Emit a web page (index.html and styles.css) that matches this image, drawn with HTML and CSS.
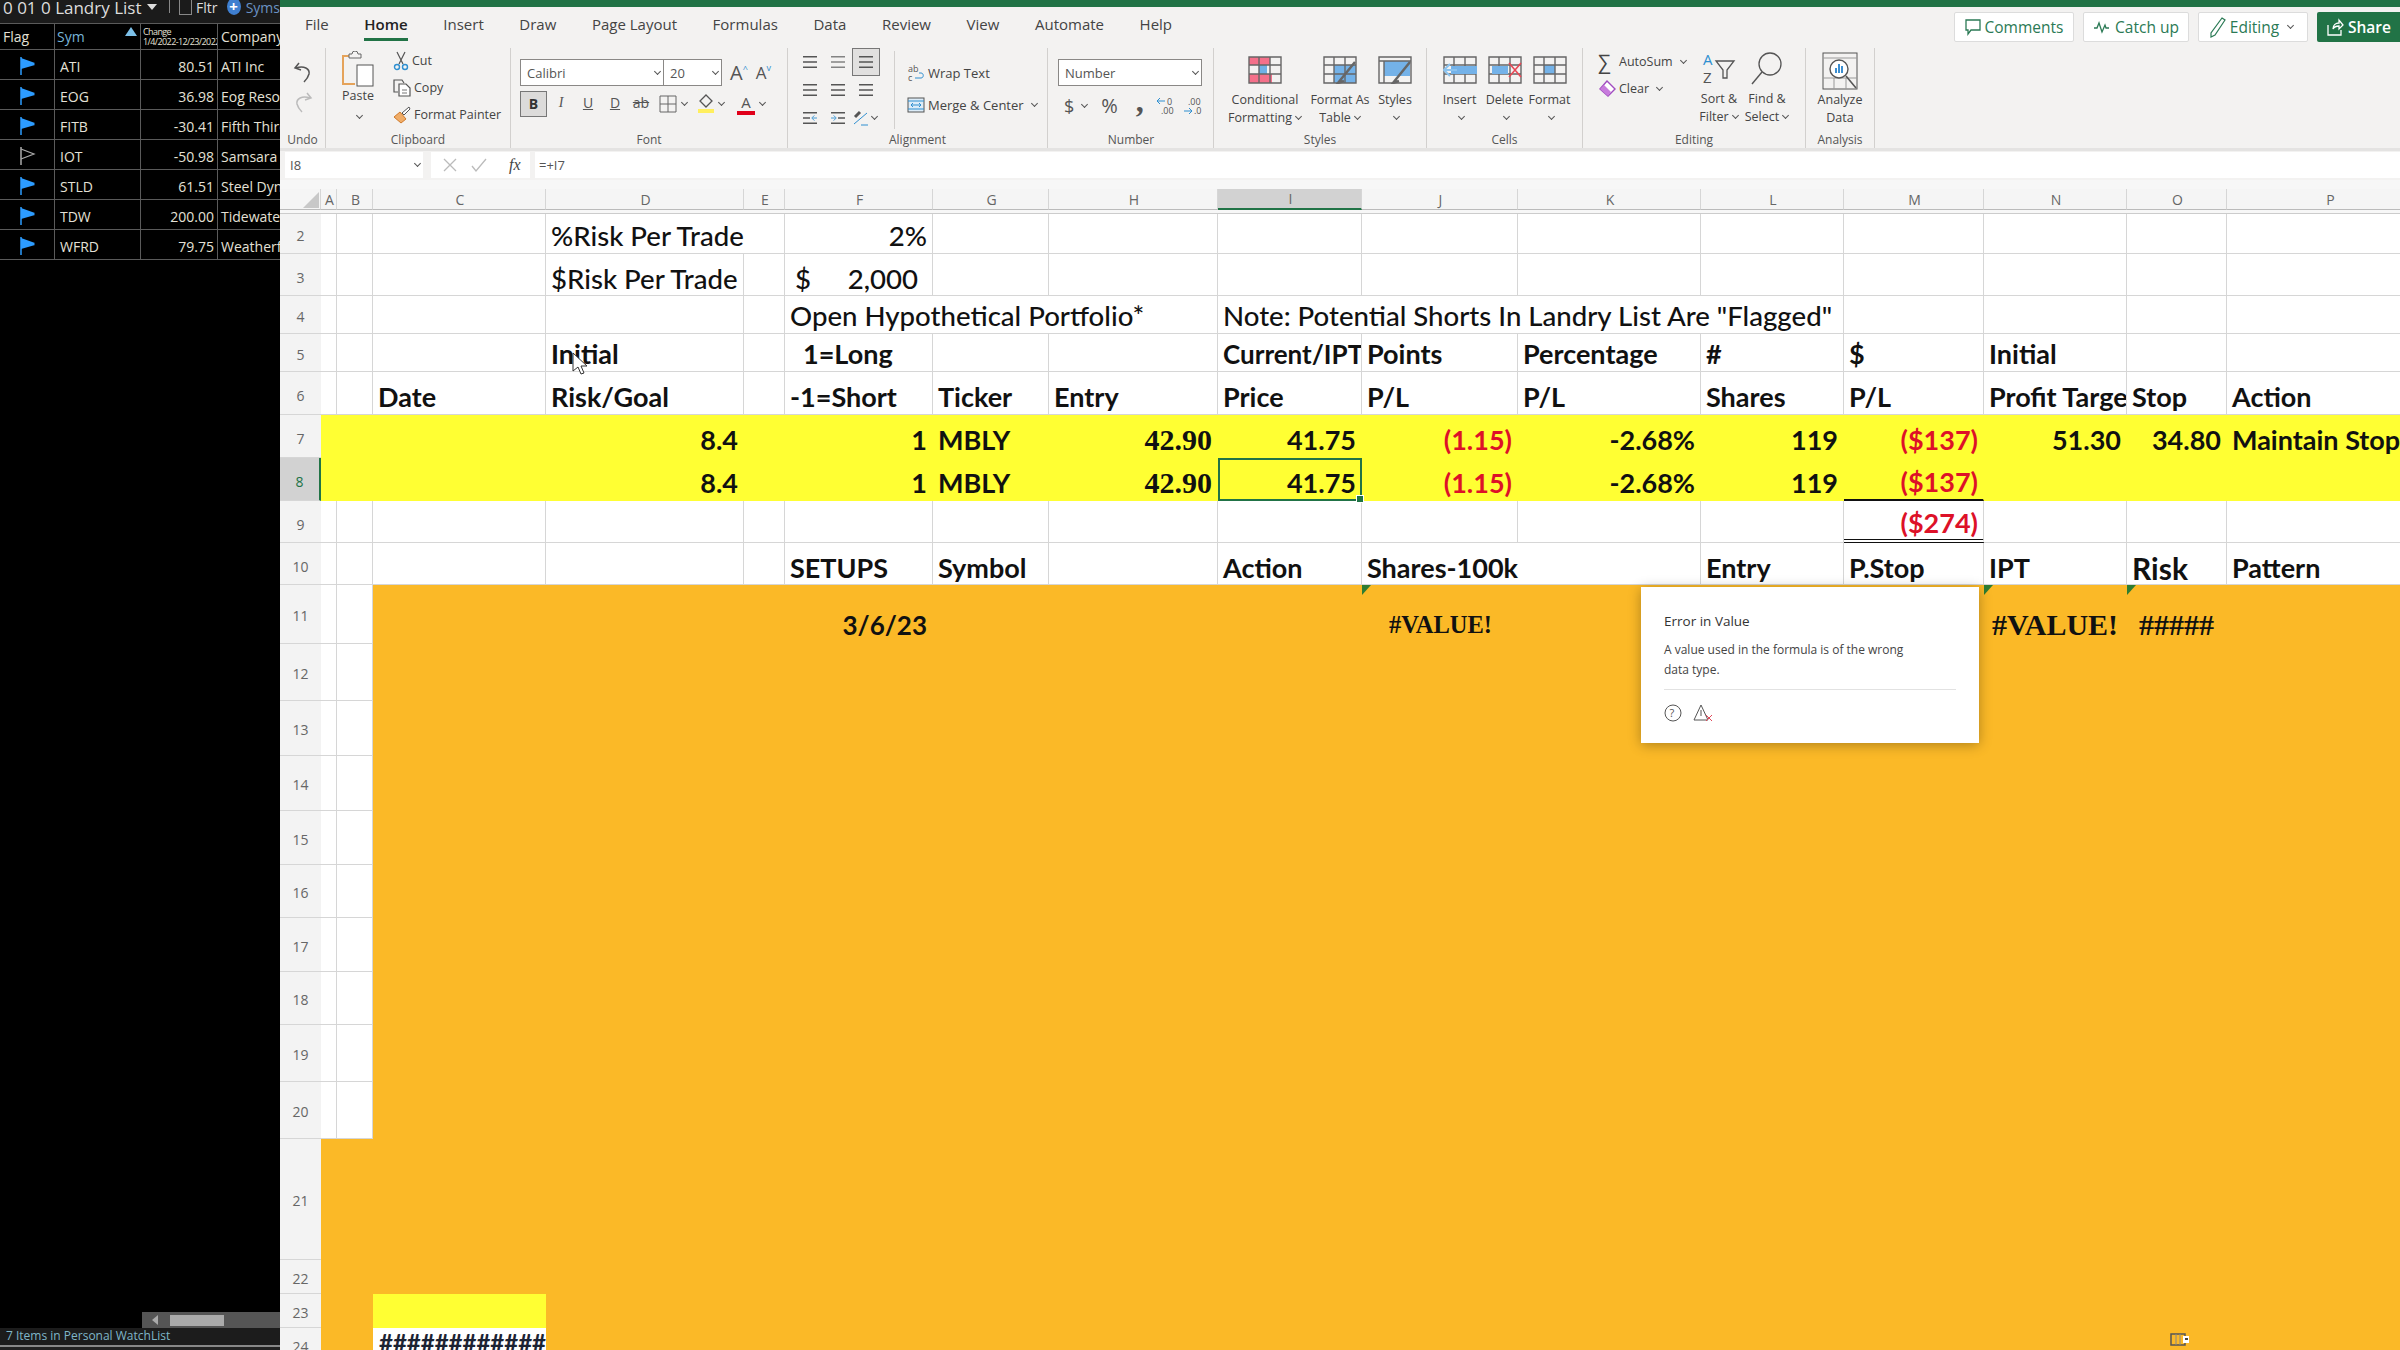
FILE: index.html
```html
<!DOCTYPE html>
<html lang="en">
<head>
    <meta charset="UTF-8">
    <title>Landry List - Excel</title>
    <link rel="stylesheet" href="styles.css">
</head>
<body>
    <svg class="defs" width="0" height="0">
        <symbol id="flag" viewBox="0 0 18 20"><path d="M2 1v18" stroke="currentColor" stroke-width="1.5"/><path d="M2 2l14 5-1 1 1 1-14 4z" fill="currentColor"/></symbol>
        <symbol id="flag-o" viewBox="0 0 18 20"><path d="M2 1v18" stroke="currentColor" stroke-width="1.5"/><path d="M2 3l13 5-13 5" fill="none" stroke="currentColor" stroke-width="1.2"/></symbol>
        <symbol id="grid" viewBox="0 0 34 28"><path d="M1 1h32v26H1zM1 9h32M1 18h32M11 1v26M22 1v26" fill="none" stroke="#666" stroke-width="1.4"/></symbol>
        <symbol id="lines" viewBox="0 0 18 16"><path d="M1 2h16M1 8h16M1 14h16" stroke="#555" stroke-width="1.6"/></symbol>
    </svg>

    <!-- watchlist panel -->
    <aside class="watchlist">
        <div class="wl-title">
            <span class="wl-name">0 01 0 Landry List</span>
            <span class="wl-caret"></span>
            <span class="wl-div"></span>
            <span class="wl-check"></span>
            <span class="wl-fltr">Fltr</span>
            <span class="wl-plus">+</span>
            <span class="wl-syms">Syms</span>
        </div>
        <table class="watch">
            <colgroup><col class="w1"><col class="w2"><col class="w3"><col class="w4"></colgroup>
            <tr class="wh">
                <th>Flag</th>
                <th class="sym">Sym<span class="sort"></span></th>
                <th class="chg">Change<br>1/4/2022-12/23/2022</th>
                <th>Company</th>
            </tr>
            <tr><td class="fl"><svg><use href="#flag"/></svg></td><td>ATI</td><td class="n">80.51</td><td>ATI Inc</td></tr>
            <tr><td class="fl"><svg><use href="#flag"/></svg></td><td>EOG</td><td class="n">36.98</td><td>Eog Resources</td></tr>
            <tr><td class="fl"><svg><use href="#flag"/></svg></td><td>FITB</td><td class="n">-30.41</td><td>Fifth Third</td></tr>
            <tr><td class="fl off"><svg><use href="#flag-o"/></svg></td><td>IOT</td><td class="n">-50.98</td><td>Samsara</td></tr>
            <tr><td class="fl"><svg><use href="#flag"/></svg></td><td>STLD</td><td class="n">61.51</td><td>Steel Dynamics</td></tr>
            <tr><td class="fl"><svg><use href="#flag"/></svg></td><td>TDW</td><td class="n">200.00</td><td>Tidewater</td></tr>
            <tr><td class="fl"><svg><use href="#flag"/></svg></td><td>WFRD</td><td class="n">79.75</td><td>Weatherford</td></tr>
        </table>
        <div class="wl-scroll"><span class="wl-left"></span><span class="wl-thumb"></span></div>
        <div class="wl-status">7 Items in Personal WatchList</div>
        <div class="wl-foot"></div>
    </aside>

    <main class="excel">
        <div class="greenbar"></div>

        <!-- tabs -->
        <div class="tabs">
            <a>File</a><a class="active">Home</a><a>Insert</a><a>Draw</a><a>Page Layout</a><a>Formulas</a><a>Data</a><a>Review</a><a>View</a><a>Automate</a><a>Help</a>
            <div class="actions">
                <button class="act b1"><svg width="16" height="18" viewBox="0 0 16 18"><path d="M1 2h14v10H6l-3 4v-4H1z" fill="none" stroke="#2b7a55" stroke-width="1.3"/></svg>Comments</button>
                <button class="act b2"><svg width="18" height="14" viewBox="0 0 18 14"><path d="M1 8h3l2-5 3 9 3-7 1 3h3" fill="none" stroke="#2b7a55" stroke-width="1.3"/></svg>Catch up</button>
                <button class="act b3"><svg width="16" height="22" viewBox="0 0 16 22"><path d="M12 2l3 2L5 19l-4 2 0-4z" fill="none" stroke="#2b7a55" stroke-width="1.2"/></svg>Editing<span class="chev"></span></button>
                <button class="act share"><svg width="18" height="18" viewBox="0 0 18 18"><path d="M2 7v10h13v-5M7 11c0-4 3-6 6-6V2l4 5-4 4V8c-3 0-5 1-6 3z" fill="none" stroke="#fff" stroke-width="1.3"/></svg>Share</button>
            </div>
        </div>

        <!-- ribbon -->
        <div class="ribbon">
            <section class="rg g-undo">
                <div class="rb undo-col">
                    <svg width="20" height="22" viewBox="0 0 20 22"><path d="M6 2L2 7l6 2M3 7c8-3 14 1 13 6-1 4-3 6-5 8" fill="none" stroke="#555" stroke-width="1.5"/></svg>
                    <svg width="20" height="22" viewBox="0 0 20 22"><path d="M14 2l4 5-6 2M17 7C9 4 3 8 4 13c1 4 3 6 5 8" fill="none" stroke="#bbb" stroke-width="1.5"/></svg>
                </div>
                <label>Undo</label>
            </section>

            <section class="rg g-clip">
                <div class="rb row">
                    <div class="paste">
                        <svg width="34" height="36" viewBox="0 0 34 36"><path d="M17 5H2v28h12" fill="none" stroke="#e5a35a" stroke-width="2"/><path d="M8 7V3h3a3 3 0 0 1 6 0h3v4z" fill="#f3f2f1" stroke="#666"/><rect x="16" y="14" width="16" height="21" fill="#fff" stroke="#555"/></svg>
                        <span>Paste</span>
                        <span class="chev"></span>
                    </div>
                    <div class="small-col">
                        <div class="sm"><svg width="16" height="20" viewBox="0 0 16 20"><path d="M4 1l6 12M12 1L6 13" stroke="#555" stroke-width="1.2"/><circle cx="4" cy="16" r="2.5" fill="none" stroke="#2f8fd0" stroke-width="1.4"/><circle cx="12" cy="16" r="2.5" fill="none" stroke="#2f8fd0" stroke-width="1.4"/></svg>Cut</div>
                        <div class="sm"><svg width="18" height="18" viewBox="0 0 18 18"><path d="M5 13H1V1h8l2 3" fill="none" stroke="#555" stroke-width="1.2"/><path d="M6 5h7l4 4v8H6z" fill="#fff" stroke="#555" stroke-width="1.2"/><path d="M9 11h5M9 14h5" stroke="#777"/></svg>Copy</div>
                        <div class="sm"><svg width="18" height="18" viewBox="0 0 18 18"><path d="M1 11l6-5 6 7-5 4z" fill="#f0ad68" stroke="#d07a2a"/><path d="M9 7l7-6 1 2-6 6z" fill="#fff" stroke="#555"/></svg>Format Painter</div>
                    </div>
                </div>
                <label>Clipboard</label>
            </section>

            <section class="rg g-font">
                <div class="rb">
                    <div class="font-row">
                        <div class="select s-font">Calibri<span class="chev"></span></div>
                        <div class="select s-size">20<span class="chev"></span></div>
                        <span class="grow big">A<sup>^</sup></span>
                        <span class="grow">A<sup>v</sup></span>
                    </div>
                    <div class="font-row tools">
                        <span class="tool on">B</span>
                        <span class="tool t-i">I</span>
                        <span class="tool t-u">U</span>
                        <span class="tool t-d">D</span>
                        <span class="tool t-s">ab</span>
                        <svg class="t-bd" width="18" height="18" viewBox="0 0 18 18"><path d="M1 1h16v16H1zM9 1v16M1 9h16" fill="none" stroke="#666"/></svg><span class="chev"></span>
                        <svg class="t-fill" width="16" height="20" viewBox="0 0 16 20"><path d="M8 1l6 6-6 6-6-6z" fill="none" stroke="#555" stroke-width="1.3"/><rect y="15" width="16" height="4" fill="#ffef5e"/></svg><span class="chev"></span>
                        <span class="t-color">A</span><span class="chev"></span>
                    </div>
                </div>
                <label>Font</label>
            </section>

            <section class="rg g-align">
                <div class="rb row">
                    <div class="align-grid">
                        <span><svg width="16" height="14"><use href="#lines"/></svg></span>
                        <span class="lite"><svg width="16" height="14"><use href="#lines"/></svg></span>
                        <span class="on"><svg width="16" height="14"><use href="#lines"/></svg></span>
                        <span><svg width="16" height="14"><use href="#lines"/></svg></span>
                        <span><svg width="16" height="14"><use href="#lines"/></svg></span>
                        <span><svg width="16" height="14"><use href="#lines"/></svg></span>
                        <span><svg width="16" height="14" viewBox="0 0 18 16"><path d="M1 2h16M1 14h16M1 8h8" stroke="#555" stroke-width="1.6"/><path d="M12 8h5M14 5l-3 3 3 3" stroke="#2f8fd0" fill="none"/></svg></span>
                        <span><svg width="16" height="14" viewBox="0 0 18 16"><path d="M1 2h16M1 14h16M9 8h8" stroke="#555" stroke-width="1.6"/><path d="M1 8h5M4 5l3 3-3 3" stroke="#2f8fd0" fill="none"/></svg></span>
                        <span class="ori"><svg width="16" height="16" viewBox="0 0 16 16"><path d="M1 14L14 3M8 15h7" stroke="#2f8fd0" fill="none"/><path d="M2 7l5-5" stroke="#555" stroke-width="3"/></svg><i class="chev"></i></span>
                    </div>
                    <div class="wrap-col">
                        <div class="sm"><svg width="18" height="18" viewBox="0 0 18 18"><text x="1" y="8" font-size="9" font-family="Open Sans" fill="#555">ab</text><text x="1" y="17" font-size="9" font-family="Open Sans" fill="#555">c</text><path d="M8 14h6c3 0 3-5 0-5h-2" fill="none" stroke="#2f8fd0"/></svg>Wrap Text</div>
                        <div class="sm"><svg width="18" height="18" viewBox="0 0 18 18"><rect x="1" y="2" width="16" height="14" fill="#dcecf8" stroke="#555"/><path d="M1 5h16M1 13h16M4 9h10M6 7L4 9l2 2M12 7l2 2-2 2" fill="none" stroke="#2f8fd0"/></svg>Merge &amp; Center<span class="chev"></span></div>
                    </div>
                </div>
                <label>Alignment</label>
            </section>

            <section class="rg g-num">
                <div class="rb">
                    <div class="font-row"><div class="select s-num">Number<span class="chev"></span></div></div>
                    <div class="font-row num-tools">
                        <span class="n-dollar">$</span><span class="chev"></span>
                        <span class="n-pct">%</span>
                        <span class="n-comma">,</span>
                        <svg width="20" height="18" viewBox="0 0 20 18"><path d="M9 4H1M4 1L1 4l3 3" fill="none" stroke="#2f8fd0"/><text x="11" y="8" font-size="9" font-family="Open Sans" fill="#555">0</text><text x="5" y="17" font-size="9" font-family="Open Sans" fill="#555">.00</text></svg>
                        <svg width="20" height="18" viewBox="0 0 20 18"><path d="M1 14h8M6 11l3 3-3 3" fill="none" stroke="#2f8fd0"/><text x="5" y="8" font-size="9" font-family="Open Sans" fill="#555">.00</text><text x="11" y="17" font-size="9" font-family="Open Sans" fill="#555">.0</text></svg>
                    </div>
                </div>
                <label>Number</label>
            </section>

            <section class="rg g-styles">
                <div class="rb row">
                    <div class="bigbtn b-cond">
                        <svg width="34" height="28" viewBox="0 0 34 28"><path d="M1 1h21v8H1zM1 18h23v9H1z" fill="#f4708a"/><path d="M11 9h8v9h-8z" fill="#6fb1e6"/><use href="#grid" width="34" height="28"/></svg>
                        <span>Conditional</span><span>Formatting<i class="chev"></i></span>
                    </div>
                    <div class="bigbtn b-table">
                        <svg width="34" height="28" viewBox="0 0 34 28"><path d="M11 9h22v18H11z" fill="#74b2e8"/><use href="#grid" width="34" height="28"/><path d="M32 6L19 22M19 22l-4 5 6-2" stroke="#666" stroke-width="2.5" fill="none"/></svg>
                        <span>Format As</span><span>Table<i class="chev"></i></span>
                    </div>
                    <div class="bigbtn b-sty">
                        <svg width="34" height="28" viewBox="0 0 34 28"><path d="M6 5h26v15H6z" fill="#74b2e8"/><path d="M1 1h32v26H1zM1 5h32M6 5v22" fill="none" stroke="#666" stroke-width="1.4"/><path d="M32 6L19 22M19 22l-4 5 6-2" stroke="#666" stroke-width="2.5" fill="none"/></svg>
                        <span>Styles</span><span><i class="chev"></i></span>
                    </div>
                </div>
                <label>Styles</label>
            </section>

            <section class="rg g-cells">
                <div class="rb row">
                    <div class="bigbtn">
                        <svg width="34" height="28" viewBox="0 0 34 28"><use href="#grid" width="34" height="28"/><path d="M8 10h26v8H8z" fill="#74b2e8"/><path d="M14 14H1M7 8l-6 6 6 6" stroke="#8cc3ee" stroke-width="2" fill="none"/></svg>
                        <span>Insert</span><span><i class="chev"></i></span>
                    </div>
                    <div class="bigbtn">
                        <svg width="34" height="28" viewBox="0 0 34 28"><use href="#grid" width="34" height="28"/><path d="M4 10h16v8H4z" fill="#74b2e8"/><path d="M21 7l12 14M33 7L21 21" stroke="#e84855" stroke-width="1.6"/></svg>
                        <span>Delete</span><span><i class="chev"></i></span>
                    </div>
                    <div class="bigbtn">
                        <svg width="34" height="28" viewBox="0 0 34 28"><path d="M11 9h11v9H11z" fill="#74b2e8"/><use href="#grid" width="34" height="28"/></svg>
                        <span>Format</span><span><i class="chev"></i></span>
                    </div>
                </div>
                <label>Cells</label>
            </section>

            <section class="rg g-edit">
                <div class="rb row">
                    <div class="edit-col">
                        <div class="sm"><span class="sigma">∑</span>AutoSum<span class="chev"></span></div>
                        <div class="sm"><svg width="18" height="18" viewBox="0 0 18 18"><path d="M9 1l8 8-7 7-8-7z" fill="#fff" stroke="#a04cc0" stroke-width="1.4"/><path d="M2 9l4-4 7 7-3 4z" fill="#c77bdc"/></svg>Clear<span class="chev"></span></div>
                    </div>
                    <div class="bigbtn b-sort">
                        <svg width="34" height="34" viewBox="0 0 34 34"><text x="1" y="14" font-size="15" font-family="Open Sans" fill="#2f8fd0">A</text><text x="1" y="32" font-size="15" font-family="Open Sans" fill="#555">Z</text><path d="M14 10h18l-7 9v8h-4v-8z" fill="none" stroke="#555" stroke-width="1.3"/></svg>
                        <span>Sort &amp;</span><span>Filter<i class="chev"></i></span>
                    </div>
                    <div class="bigbtn b-sort">
                        <svg width="34" height="34" viewBox="0 0 34 34"><circle cx="20" cy="13" r="11" fill="none" stroke="#555" stroke-width="1.3"/><path d="M12 21L2 33" stroke="#555" stroke-width="1.4"/></svg>
                        <span>Find &amp;</span><span>Select<i class="chev"></i></span>
                    </div>
                </div>
                <label>Editing</label>
            </section>

            <section class="rg g-an">
                <div class="rb row">
                    <div class="bigbtn b-an">
                        <svg width="36" height="38" viewBox="0 0 36 38"><rect x="1" y="1" width="34" height="36" fill="#f3f2f1" stroke="#555"/><path d="M1 6h34M1 26h34M12 26v11M24 26v11" stroke="#999"/><circle cx="17" cy="17" r="9" fill="#fff" stroke="#555" stroke-width="1.4"/><path d="M13 21v-5h2v5zM16 21v-9h2v9zM19 21v-7h2v7z" fill="#3c8ed0"/><path d="M24 24l10 12" stroke="#555" stroke-width="1.6"/></svg>
                        <span>Analyze</span><span>Data</span>
                    </div>
                </div>
                <label>Analysis</label>
            </section>
        </div>

        <!-- formula bar -->
        <div class="fbar">
            <div class="fbox namebox">I8<span class="chev"></span></div>
            <div class="fbox fbtns">
                <svg width="16" height="16" viewBox="0 0 16 16"><path d="M2 2l12 12M14 2L2 14" stroke="#bbb" stroke-width="1.3"/></svg>
                <svg width="18" height="16" viewBox="0 0 18 16"><path d="M2 9l4 5L16 2" fill="none" stroke="#bbb" stroke-width="1.3"/></svg>
                <span class="fx">fx</span>
            </div>
            <div class="fbox formula">=+I7</div>
        </div>

        <!-- sheet -->
        <div class="sheet">
            <table class="grid">
                <colgroup>
                    <col class="c-h"><col class="c-a"><col class="c-b"><col class="c-c"><col class="c-d"><col class="c-e"><col class="c-f"><col class="c-g"><col class="c-hh"><col class="c-i"><col class="c-j"><col class="c-k"><col class="c-l"><col class="c-m"><col class="c-n"><col class="c-o"><col class="c-p">
                </colgroup>
                <tr class="heads">
                    <th class="corner"><span></span></th><th>A</th><th>B</th><th>C</th><th>D</th><th>E</th><th>F</th><th>G</th><th>H</th><th class="sel">I</th><th>J</th><th>K</th><th>L</th><th>M</th><th>N</th><th>O</th><th>P</th>
                </tr>
                <tr class="gap"><td colspan="17"></td></tr>
                <tr class="h40"><th>2</th><td></td><td></td><td></td><td colspan="2" class="reg">%Risk Per Trade</td><td class="r reg">2%</td><td></td><td></td><td></td><td></td><td></td><td></td><td></td><td></td><td></td><td></td></tr>
                <tr class="h42"><th>3</th><td></td><td></td><td></td><td class="reg">$Risk Per Trade</td><td></td><td class="reg"><div class="acct"><span>$</span><span>2,000</span></div></td><td></td><td></td><td></td><td></td><td></td><td></td><td></td><td></td><td></td><td></td></tr>
                <tr class="h38"><th>4</th><td></td><td></td><td></td><td></td><td></td><td colspan="3" class="reg">Open Hypothetical Portfolio*</td><td colspan="4" class="reg">Note: Potential Shorts In Landry List Are "Flagged"</td><td></td><td></td><td></td><td></td></tr>
                <tr class="h38"><th>5</th><td></td><td></td><td></td><td>Initial</td><td></td><td class="ind">1=Long</td><td></td><td></td><td class="tight">Current/IPT</td><td>Points</td><td>Percentage</td><td>#</td><td>$</td><td>Initial</td><td></td><td></td></tr>
                <tr class="h43"><th>6</th><td></td><td></td><td>Date</td><td>Risk/Goal</td><td></td><td>-1=Short</td><td>Ticker</td><td>Entry</td><td>Price</td><td>P/L</td><td>P/L</td><td>Shares</td><td>P/L</td><td>Profit Target</td><td>Stop</td><td>Action</td></tr>
                <tr class="h43 yel"><th>7</th><td></td><td></td><td></td><td class="r">8.4</td><td></td><td class="r">1</td><td>MBLY</td><td class="r tnr">42.90</td><td class="r">41.75</td><td class="r red">(1.15)</td><td class="r">-2.68%</td><td class="r">119</td><td class="r red">($137)</td><td class="r">51.30</td><td class="r">34.80</td><td>Maintain Stop</td></tr>
                <tr class="h43 yel"><th class="sel">8</th><td></td><td></td><td></td><td class="r">8.4</td><td></td><td class="r">1</td><td>MBLY</td><td class="r tnr">42.90</td><td class="r active-cell">41.75</td><td class="r red">(1.15)</td><td class="r">-2.68%</td><td class="r">119</td><td class="r red under">($137)</td><td></td><td></td><td></td></tr>
                <tr class="h42"><th>9</th><td></td><td></td><td></td><td></td><td></td><td></td><td></td><td></td><td></td><td></td><td></td><td></td><td class="r red dbl">($274)</td><td></td><td></td><td></td></tr>
                <tr class="h42"><th>10</th><td></td><td></td><td></td><td></td><td></td><td>SETUPS</td><td>Symbol</td><td></td><td>Action</td><td colspan="2">Shares-100k</td><td>Entry</td><td>P.Stop</td><td>IPT</td><td class="lg">Risk</td><td>Pattern</td></tr>
                <tr class="h59 org-row"><th>11</th><td class="w"></td><td class="w"></td><td class="o" colspan="3"></td><td class="o r date">3/6/23</td><td class="o" colspan="3"></td><td class="o val val-sm err">#VALUE!</td><td class="o" colspan="3"></td><td class="o val err">#VALUE!</td><td class="o val err">#####</td><td class="o"></td></tr>
                <tr class="h57"><th>12</th><td class="w"></td><td class="w"></td><td class="o" colspan="14"></td></tr>
                <tr class="h55"><th>13</th><td class="w"></td><td class="w"></td><td class="o" colspan="14"></td></tr>
                <tr class="h55"><th>14</th><td class="w"></td><td class="w"></td><td class="o" colspan="14"></td></tr>
                <tr class="h54"><th>15</th><td class="w"></td><td class="w"></td><td class="o" colspan="14"></td></tr>
                <tr class="h53"><th>16</th><td class="w"></td><td class="w"></td><td class="o" colspan="14"></td></tr>
                <tr class="h54"><th>17</th><td class="w"></td><td class="w"></td><td class="o" colspan="14"></td></tr>
                <tr class="h53"><th>18</th><td class="w"></td><td class="w"></td><td class="o" colspan="14"></td></tr>
                <tr class="h57"><th>19</th><td class="w"></td><td class="w"></td><td class="o" colspan="14"></td></tr>
                <tr class="h57"><th>20</th><td class="w"></td><td class="w"></td><td class="o" colspan="14"></td></tr>
                <tr class="h121"><th>21</th><td class="o" colspan="16"></td></tr>
                <tr class="h34"><th>22</th><td class="o" colspan="16"></td></tr>
                <tr class="h34"><th>23</th><td class="o" colspan="2"></td><td class="yc"></td><td class="o" colspan="13"></td></tr>
                <tr class="h34"><th>24</th><td class="o" colspan="2"></td><td class="hash">#############</td><td class="o" colspan="13"></td></tr>
            </table>
        </div>
    </main>

    <!-- things lying over the sheet -->
    <div class="popup">
        <h4>Error in Value</h4>
        <p>A value used in the formula is of the wrong data type.</p>
        <hr>
        <div class="popup-icons">
            <svg width="18" height="18" viewBox="0 0 18 18"><circle cx="9" cy="9" r="8" fill="none" stroke="#555"/><text x="5.5" y="13" font-size="11" font-family="Open Sans" fill="#555">?</text></svg>
            <svg width="20" height="18" viewBox="0 0 20 18"><path d="M8 1l7 15H1z" fill="none" stroke="#555"/><path d="M8 6v6" stroke="#555"/><path d="M13 11l6 6M19 11l-6 6" stroke="#e0485a"/></svg>
        </div>
    </div>
    <svg class="cursor" width="16" height="24" viewBox="0 0 16 24"><path d="M1 1v18l5-4 3 7 3-1-3-7h6z" fill="#fff" stroke="#333" stroke-width="1"/></svg>
    <svg class="view-icon" width="20" height="13" viewBox="0 0 20 13"><rect x="1" y="1" width="14" height="11" fill="#fbb927" stroke="#555" stroke-width="1.5"/><path d="M6 1v11M10 1v11" stroke="#888"/><rect x="13" y="3" width="6" height="7" fill="#fff"/><rect x="15" y="5" width="3" height="2" fill="#444"/></svg>
</body>
</html>
```

FILE: styles.css
```css
/* page */
* {
    box-sizing: border-box;
}

body {
    margin: 0;
    width: 2400px;
    height: 1350px;
    overflow: hidden;
    display: flex;
    font-family: "Open Sans", sans-serif;
    background: #fff;
}

.defs {
    position: absolute;
}

.chev {
    display: inline-block;
    width: 5px;
    height: 5px;
    border-right: 1.4px solid #555;
    border-bottom: 1.4px solid #555;
    transform: rotate(45deg);
    margin: 0 3px 3px 5px;
}

/* watchlist */
.watchlist {
    width: 280px;
    flex: none;
    height: 1350px;
    background: #000;
    color: #ddd;
    display: flex;
    flex-direction: column;
    overflow: hidden;
}

.wl-title {
    height: 23px;
    background: #1b1b1b;
    display: flex;
    align-items: flex-start;
    font-size: 17px;
    line-height: 15px;
    padding-left: 3px;
    white-space: nowrap;
    overflow: hidden;
}

.wl-caret {
    width: 0;
    height: 0;
    margin: 4px 0 0 6px;
    border: 5px solid transparent;
    border-top: 6px solid #ddd;
    border-bottom: 0;
}

.wl-div {
    width: 1px;
    height: 13px;
    background: #888;
    margin: 0 9px 0 12px;
}

.wl-check {
    width: 15px;
    height: 15px;
    border: 1px solid #888;
    border-top: 0;
}

.wl-fltr {
    margin-left: 4px;
    font-size: 14px;
}

.wl-plus {
    width: 17px;
    height: 17px;
    margin: -2px 0 0 9px;
    border-radius: 50%;
    background: #3f7fd0;
    color: #fff;
    font-size: 15px;
    font-weight: 700;
    text-align: center;
    line-height: 16px;
}

.wl-syms {
    margin-left: 5px;
    font-size: 14px;
    color: #6a92c4;
}

.watch {
    table-layout: fixed;
    width: 280px;
    border-collapse: separate;
    border-spacing: 0;
    font-size: 14px;
}

.w1 { width: 55px; }
.w2 { width: 86px; }
.w3 { width: 77px; }
.w4 { width: 62px; }

.watch th, .watch td {
    height: 30px;
    padding: 3px 3px 0;
    border-right: 1px solid #5a5a5a;
    border-bottom: 1px solid #5a5a5a;
    white-space: nowrap;
    overflow: hidden;
    font-weight: 400;
    text-align: left;
    color: #e4e0d6;
}

.watch th {
    height: 27px;
    padding-top: 0;
    border-top: 1px solid #5a5a5a;
}

.watch th:last-child, .watch td:last-child {
    border-right: 0;
}

.watch td:nth-child(2) {
    padding-left: 5px;
}

.watch .n {
    text-align: right;
}

.watch .sym {
    position: relative;
    color: #77b4d8;
    padding-left: 2px;
}

.sort {
    position: absolute;
    top: 3px;
    right: 3px;
    border: 6px solid transparent;
    border-top: 0;
    border-bottom: 9px solid #7cc0e8;
}

.watch .chg {
    font-size: 9px;
    line-height: 10px;
    letter-spacing: -0.6px;
    padding: 0 0 0 2px;
}

.watch td.fl {
    padding-top: 0;
}

.fl svg {
    display: block;
    width: 18px;
    height: 20px;
    margin: 2px 0 0 16px;
    color: #2d9cff;
}

.fl.off svg {
    color: #aaa;
}

.wl-scroll {
    margin-top: auto;
    margin-left: auto;
    width: 138px;
    height: 16px;
    background: #555;
    display: flex;
    align-items: center;
    padding-left: 10px;
}

.wl-left {
    border: 5px solid transparent;
    border-right: 6px solid #aaa;
    border-left: 0;
}

.wl-thumb {
    width: 54px;
    height: 11px;
    margin-left: 12px;
    background: #aaa;
}

.wl-status {
    height: 17px;
    background: #1c1c1c;
    color: #7fb6c8;
    font-size: 12px;
    line-height: 16px;
    padding-left: 6px;
}

.wl-foot {
    height: 5px;
    border-top: 2px solid #888;
    background: #222;
}

/* excel window */
.excel {
    flex: 1;
    min-width: 0;
    height: 1350px;
    display: flex;
    flex-direction: column;
    overflow: hidden;
}

.greenbar {
    height: 7px;
    background: #217346;
}

.tabs {
    height: 41px;
    background: #f3f2f1;
    display: flex;
    gap: 35.6px;
    padding: 8px 0 0 25px;
    font-size: 15px;
    color: #444;
}

.tabs a {
    position: relative;
    height: 24px;
    line-height: 18px;
}

.tabs a.active {
    color: #222;
    font-weight: 600;
}

.tabs a.active::after {
    content: "";
    position: absolute;
    left: 0;
    right: 0;
    top: 23px;
    height: 3px;
    background: #217346;
}

.actions {
    margin-left: auto;
    margin-top: -3px;
    display: flex;
    gap: 9px;
}

.act {
    height: 30px;
    display: flex;
    align-items: center;
    justify-content: center;
    gap: 4px;
    border: 1px solid #dcdcdc;
    border-radius: 2px;
    background: #fff;
    color: #2b7a55;
    font: 15.5px "Open Sans", sans-serif;
    padding: 0;
}

.b1 { width: 120px; }
.b2 { width: 106px; }
.b3 { width: 110px; }

.act.share {
    width: 83px;
    border: 0;
    background: #217346;
    color: #fff;
    font-weight: 600;
    justify-content: flex-start;
    padding-left: 9px;
    white-space: nowrap;
    border-radius: 2px 0 0 2px;
}

/* ribbon */
.ribbon {
    height: 103px;
    background: #f3f2f1;
    border-bottom: 3px solid #e4e3e2;
    display: flex;
    align-items: flex-start;
    font-size: 12.5px;
    color: #444;
}

.rg {
    height: 100px;
    display: flex;
    flex-direction: column;
    border-right: 1px solid #d2d0ce;
    flex: none;
}

.rg label {
    height: 17px;
    line-height: 17px;
    text-align: center;
    font-size: 12px;
    color: #555;
}

.rb {
    flex: 1;
    min-height: 0;
}

.row {
    display: flex;
}

.g-undo { width: 46px; }
.g-clip { width: 185px; }
.g-font { width: 277px; padding-left: 9px; }
.g-align { width: 260px; }
.g-num { width: 166px; padding-left: 10px; }
.g-styles { width: 213px; }
.g-cells { width: 156px; }
.g-edit { width: 223px; }
.g-an { width: 69px; border-right: 1px solid #d2d0ce; }

.g-font label, .g-num label {
    margin-left: -9px;
}

.undo-col {
    display: flex;
    flex-direction: column;
    align-items: center;
    gap: 8px;
    padding-top: 13px;
}

.paste {
    width: 60px;
    margin-left: 2px;
    padding-top: 3px;
    display: flex;
    flex-direction: column;
    align-items: center;
    line-height: 18px;
}

.paste .chev {
    margin-top: 8px;
}

.small-col {
    margin-left: 5px;
    margin-top: -1px;
    display: flex;
    flex-direction: column;
}

.sm {
    height: 27px;
    display: flex;
    align-items: center;
    gap: 3px;
    white-space: nowrap;
}

.sm svg {
    flex: none;
}

.font-row {
    display: flex;
    align-items: center;
    margin-top: 11px;
}

.select {
    height: 27px;
    display: flex;
    align-items: center;
    justify-content: space-between;
    padding-left: 6px;
    background: #fff;
    border: 1px solid #8a8886;
    font-size: 13px;
    color: #555;
}

.s-font { width: 144px; }
.s-size { width: 58px; border-left: 0; }
.s-num { width: 144px; }

.grow {
    margin-left: 8px;
    font-size: 17px;
    color: #555;
    line-height: 20px;
}

.grow.big {
    font-size: 20px;
}

.grow sup {
    font-size: 9px;
    color: #2f8fd0;
    vertical-align: 8px;
    line-height: 0;
}

.tools {
    margin-top: 5px;
    height: 26px;
}

.tool {
    width: 28px;
    height: 26px;
    line-height: 24px;
    text-align: center;
    font-size: 14px;
    color: #555;
}

.tool.on {
    width: 27px;
    background: #dcdbda;
    border: 1px solid #777;
    font-weight: 700;
    color: #333;
}

.t-i { font-style: italic; font-family: "Liberation Serif", serif; }
.t-u { text-decoration: underline; width: 26px; }
.t-d { text-decoration: underline; }
.t-s { text-decoration: line-through; width: 24px; }
.t-bd { margin-left: 6px; }
.t-fill { margin-left: 8px; }

.t-color {
    margin-left: 10px;
    width: 18px;
    border-bottom: 4px solid #e0001a;
    text-align: center;
    font-size: 15px;
    line-height: 17px;
    color: #555;
}

.align-grid {
    margin-left: 8px;
    width: 84px;
    height: 85px;
    display: grid;
    grid-template-columns: repeat(3, 28px);
    grid-template-rows: repeat(3, 28px);
}

.align-grid span {
    display: flex;
    align-items: center;
    justify-content: center;
}

.align-grid .on {
    background: #e1e0df;
    border: 1px solid #777;
}

.align-grid .lite svg {
    opacity: .7;
}

.align-grid .chev {
    margin-left: 3px;
}

.wrap-col {
    margin: 3px 0 0 14px;
    height: 78px;
    padding: 8px 0 0 12px;
    border-left: 1px solid #d2d0ce;
    display: flex;
    flex-direction: column;
    gap: 5px;
}

.wrap-col .sm {
    font-size: 13px;
}

.num-tools {
    margin-top: 6px;
    padding-left: 6px;
    font-size: 18px;
    color: #555;
}

.num-tools .chev { margin-left: 8px; margin-right: 5px; }
.n-pct { margin-left: 9px; font-size: 20px; }
.n-comma { margin: -10px 12px 0 18px; font-weight: 800; font-family: "Liberation Serif", serif; font-size: 32px; line-height: 20px; }
.num-tools svg + svg { margin-left: 7px; }

.bigbtn {
    display: flex;
    flex-direction: column;
    align-items: center;
    width: 45px;
    padding-top: 8px;
    line-height: 18px;
    white-space: nowrap;
}

.bigbtn svg {
    margin-bottom: 7px;
    flex: none;
}

.bigbtn .chev {
    margin: 0 1px 3px 4px;
}

.g-cells .row { padding-left: 10px; }
.g-styles .row { padding-left: 12px; }
.b-cond { width: 78px; }
.b-table { width: 72px; }
.b-sty { width: 38px; }

.edit-col {
    width: 112px;
    padding-left: 15px;
}

.sigma {
    font-size: 20px;
    width: 18px;
    line-height: 20px;
}

.b-sort {
    width: 48px;
    padding-top: 3px;
}

.b-sort svg {
    margin-bottom: 5px;
}

.b-an {
    width: 69px;
    padding-top: 4px;
}

.b-an svg {
    margin-bottom: 1px;
}

/* formula bar */
.fbar {
    height: 29px;
    padding: 1px 0 0 5px;
    background: #f3f2f1;
    display: flex;
    gap: 8px;
}

.fbox {
    height: 26px;
    background: #fff;
    display: flex;
    align-items: center;
    font-size: 13px;
    color: #555;
}

.namebox {
    width: 138px;
    padding-left: 5px;
    justify-content: space-between;
}

.fbtns {
    width: 99px;
    padding-left: 11px;
    gap: 12px;
}

.fx {
    font: italic 16px "Liberation Serif", serif;
    color: #444;
    margin-left: 9px;
}

.formula {
    flex: 1;
    padding-left: 4px;
    margin-left: -3px;
}

/* sheet */
.sheet {
    flex: 1;
    min-height: 0;
    padding-top: 9px;
    background: #f7f7f7;
    overflow: hidden;
}

.grid {
    table-layout: fixed;
    width: 2153px;
    border-collapse: separate;
    border-spacing: 0;
    font-family: Lato, sans-serif;
    font-size: 27px;
    font-weight: 700;
    color: #111;
    background: #fff;
}

.c-h { width: 41px; }
.c-a { width: 16px; }
.c-b { width: 36px; }
.c-c { width: 173px; }
.c-d { width: 198px; }
.c-e { width: 41px; }
.c-f { width: 148px; }
.c-g { width: 116px; }
.c-hh { width: 169px; }
.c-i { width: 144px; }
.c-j { width: 156px; }
.c-k { width: 183px; }
.c-l { width: 143px; }
.c-m { width: 140px; }
.c-n { width: 143px; }
.c-o { width: 100px; }
.c-p { width: 206px; }

.grid td {
    padding: 0 5px 2px;
    vertical-align: bottom;
    line-height: 30px;
    white-space: nowrap;
    overflow: hidden;
    border-right: 1px solid #d6d6d6;
    border-bottom: 1px solid #d6d6d6;
}

.grid th {
    padding: 3px 0 0;
    background: #f3f3f3;
    border-bottom: 1px solid #d6d6d6;
    font: 400 14px "Open Sans", sans-serif;
    color: #666;
    text-align: center;
}

.grid .heads th {
    height: 21px;
    padding: 0 0 0 2px;
    border-right: 1px solid #d6d6d6;
    border-bottom: 1px solid #bbb;
    background: #f5f5f5;
}

.grid .heads th.sel {
    background: #d2d2d2;
    border-bottom: 2px solid #217346;
}

.corner span {
    display: block;
    margin: 1px 0 0 21px;
    width: 0;
    height: 0;
    border-left: 16px solid transparent;
    border-bottom: 16px solid #c8c8c8;
}

.grid .gap td {
    height: 4px;
    padding: 0;
    line-height: 0;
    border: 0;
    border-bottom: 1px solid #ccc;
    background: #f7f7f7;
}

.h34 > * { height: 34px; }
.h38 > * { height: 38px; }
.h40 > * { height: 40px; }
.h42 > * { height: 42px; }
.h43 > * { height: 43px; }
.h53 > * { height: 53px; }
.h54 > * { height: 54px; }
.h55 > * { height: 55px; }
.h57 > * { height: 57px; }
.h59 > * { height: 59px; }
.h121 > * { height: 121px; }

.grid .h42 td { padding-bottom: 1px; }
.grid .h42 th { padding-top: 5px; }
.grid .h43 th { padding-top: 5px; }

.grid .reg { font-size: 27.6px; font-weight: 500; }
.grid .r { text-align: right; }
.grid .ind { padding-left: 18px; }
.grid .lg { font-size: 30px; }
.grid .tight { font-size: 26px; }

.acct {
    display: flex;
    justify-content: space-between;
    padding-right: 9px;
    padding-left: 5px;
}

.grid .red { color: #dd1128; }

.grid .tnr {
    font: 700 30px/30px "Liberation Serif", serif;
}

/* yellow rows */
.yel td {
    background: #ffff33;
    border-color: #ffff33;
}

.yel th.sel {
    background: #d2d2d2;
    border-right: 2px solid #217346;
    color: #217346;
}

.yel td.under {
    border-bottom: 2px solid #111;
}

.yel td.active-cell {
    position: relative;
    outline: 2px solid #217346;
    outline-offset: -2px;
    overflow: visible;
}

.active-cell::after {
    content: "";
    position: absolute;
    right: -3px;
    bottom: -3px;
    width: 6px;
    height: 6px;
    background: #217346;
    border: 1px solid #fff;
}

.grid td.dbl {
    border-bottom: 4px double #111;
}

/* orange block */
.grid td.o {
    background: #fbb927;
    border-color: #fbb927;
}

.grid td.date {
    font-size: 26px;
    padding-bottom: 3px;
}

.grid td.val {
    font: 700 30px/30px "Liberation Serif", serif;
    text-align: center;
    padding: 0 0 3px;
}

.grid td.val-sm {
    font-size: 24.5px;
    padding-left: 2px;
}

.err {
    position: relative;
}

.err::before {
    content: "";
    position: absolute;
    left: 0;
    top: 0;
    border-top: 10px solid #2e7d32;
    border-right: 9px solid transparent;
}

.grid td.yc {
    background: #ffff33;
    border: 0;
}

.grid td.hash {
    background: #fff;
    border: 0;
    font-size: 24px;
    color: #1c2333;
    padding: 0 0 0 6px;
    vertical-align: top;
    text-align: left;
}

/* overlays */
.popup {
    position: absolute;
    left: 1641px;
    top: 587px;
    width: 338px;
    height: 156px;
    padding: 25px 23px 0;
    background: #fff;
    box-shadow: 0 2px 12px rgba(0, 0, 0, .3);
    color: #444;
}

.popup h4 {
    margin: 0;
    font-size: 13.5px;
    font-weight: 400;
    line-height: 18px;
    color: #333;
}

.popup p {
    margin: 10px 0 0;
    max-width: 260px;
    font-size: 12px;
    line-height: 20px;
}

.popup hr {
    margin: 9px 0 0;
    border: 0;
    border-top: 1px solid #e2e2e2;
}

.popup-icons {
    display: flex;
    gap: 11px;
    margin-top: 14px;
}

.cursor {
    position: absolute;
    left: 572px;
    top: 352px;
}

.view-icon {
    position: absolute;
    left: 2170px;
    top: 1333px;
}
```
